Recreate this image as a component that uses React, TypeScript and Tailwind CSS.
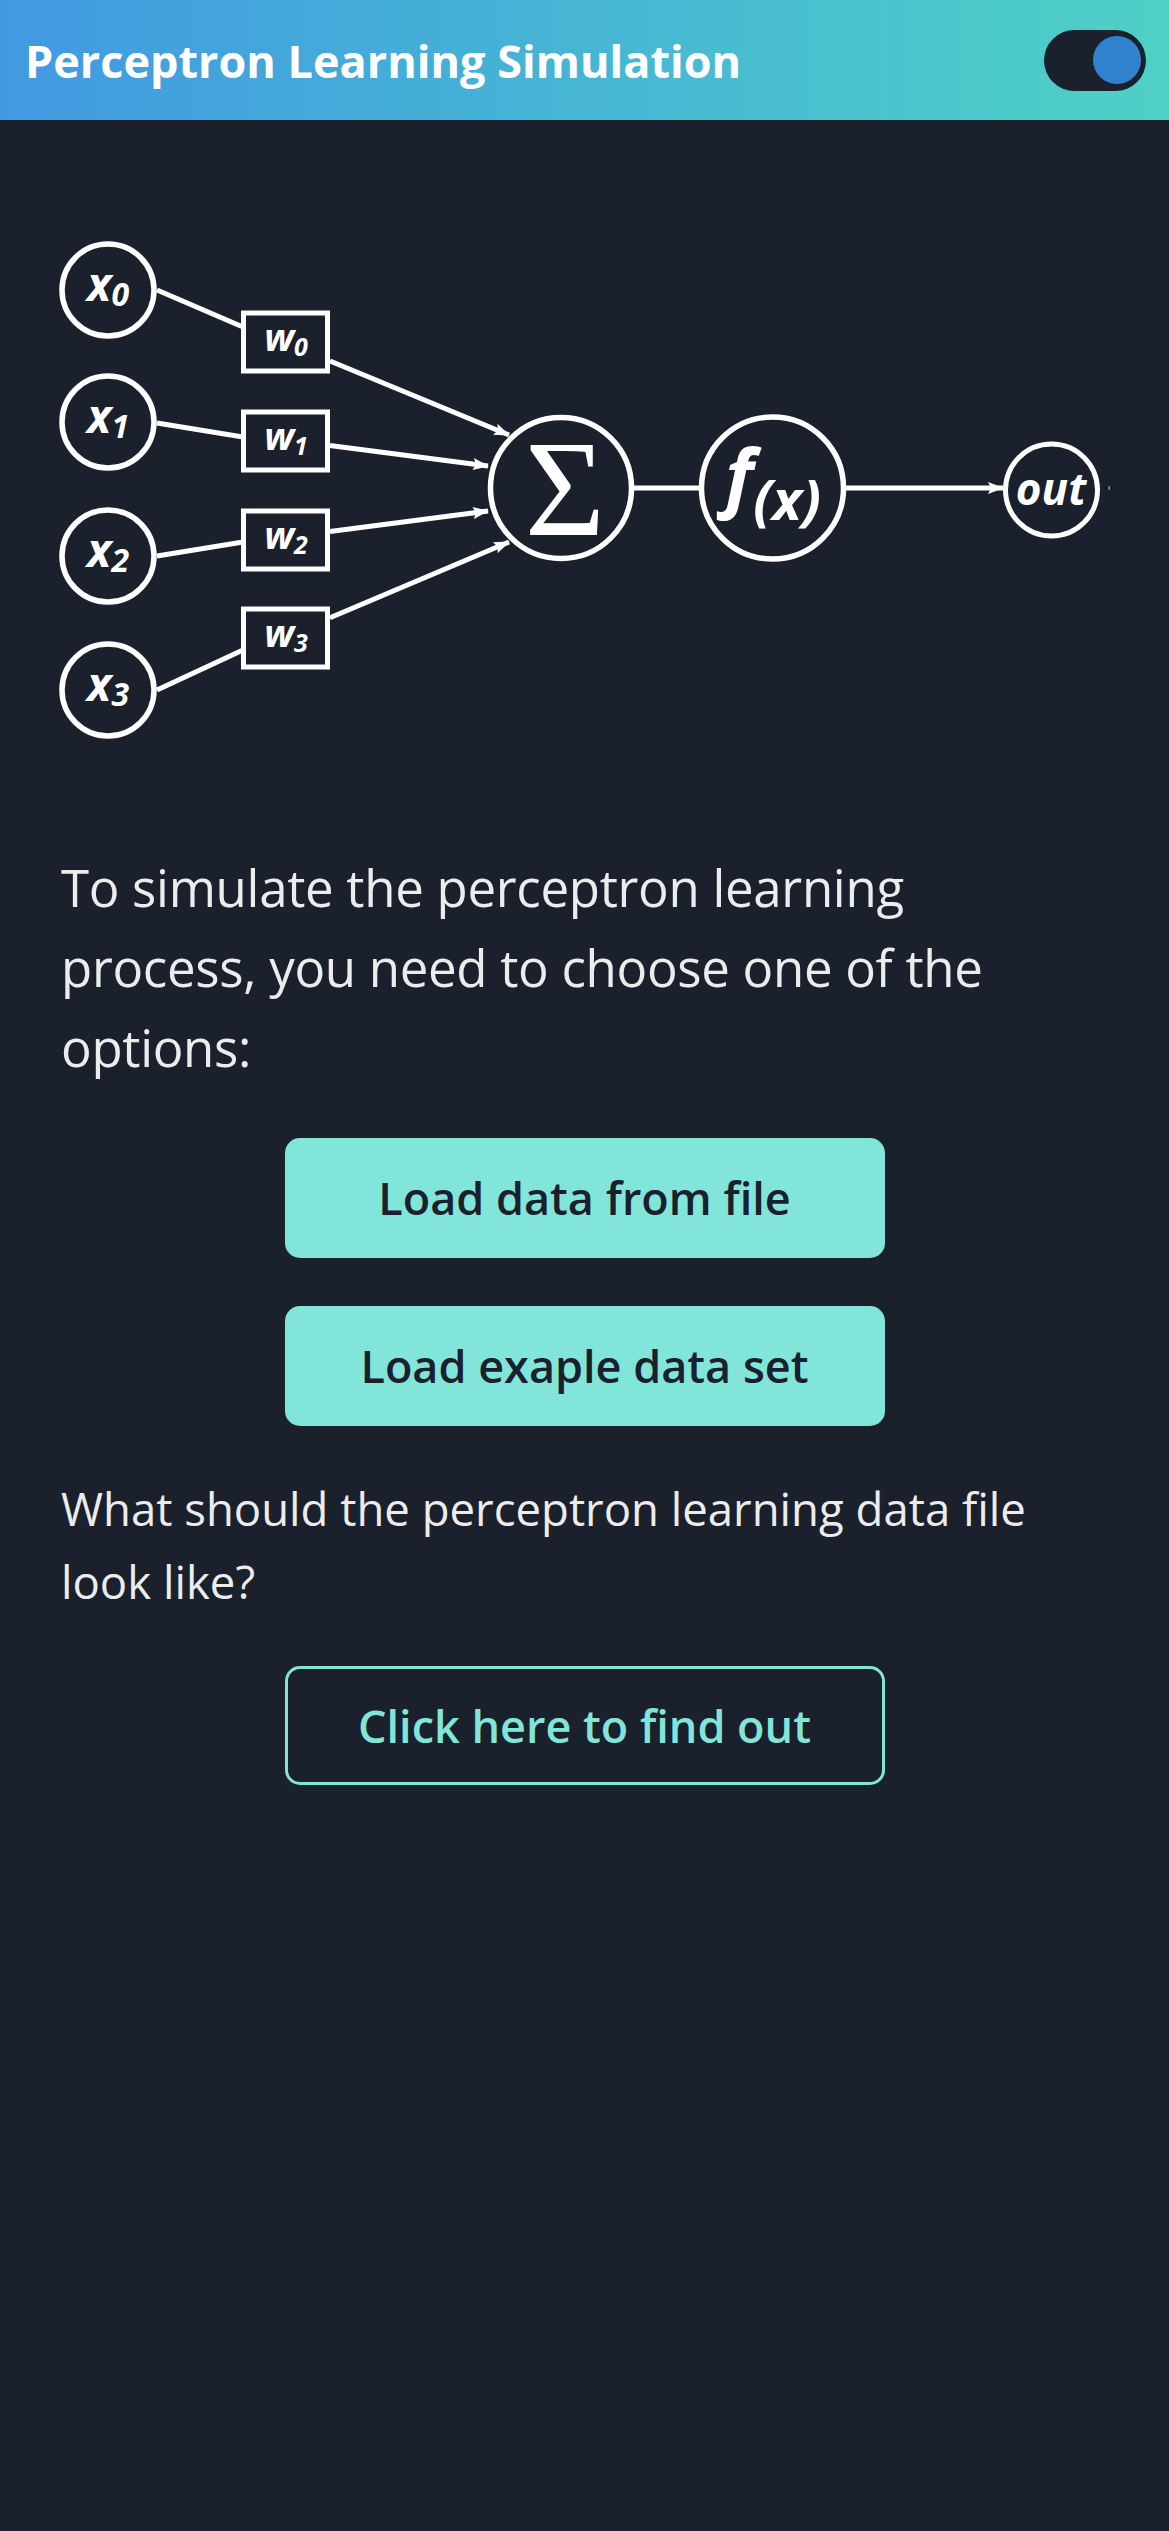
import React from "react";

const W = "#ffffff";

function Diagram() {
  const sw = 5;
  const xCircles = [290, 422, 556, 690];
  const wCenters = [342, 441, 540, 638];
  const xLines = [
    [157, 290, 243, 327],
    [157, 423, 243, 437],
    [157, 556, 243, 542],
    [157, 690, 243, 650],
  ];
  const wLines = [
    [330, 361, 509, 435],
    [330, 445.5, 488, 466],
    [330, 531.6, 488, 511],
    [330, 617.7, 509, 542],
  ];
  const font = "'Open Sans', 'Noto Sans', sans-serif";
  return (
    <svg
      width="1169"
      height="660"
      viewBox="0 120 1169 660"
      className="block"
      xmlns="http://www.w3.org/2000/svg"
    >
      <defs>
        <marker
          id="arr"
          markerUnits="userSpaceOnUse"
          markerWidth="16"
          markerHeight="14"
          refX="15"
          refY="7"
          orient="auto"
        >
          <path d="M0,1 L16,7 L0,13 L3,7 Z" fill={W} />
        </marker>
      </defs>
      {xCircles.map((cy, i) => (
        <g key={"x" + i}>
          <circle cx="108" cy={cy} r="46" fill="none" stroke={W} strokeWidth="5.5" />
          <text
            x="108"
            y={cy + 11}
            textAnchor="middle"
            fill={W}
            fontFamily={font}
            fontStyle="italic"
            fontWeight="700"
            fontSize="46"
          >
            x
            <tspan fontSize="32" dy="5">
              {i}
            </tspan>
          </text>
        </g>
      ))}
      {wCenters.map((cy, i) => (
        <g key={"w" + i}>
          <rect x="243.5" y={cy - 29} width="84" height="58" fill="none" stroke={W} strokeWidth={sw} />
          <text
            x="286"
            y={cy + 9}
            textAnchor="middle"
            fill={W}
            fontFamily={font}
            fontStyle="italic"
            fontWeight="700"
            fontSize="38"
          >
            w
            <tspan fontSize="25" dy="5">
              {i}
            </tspan>
          </text>
        </g>
      ))}
      {xLines.map((l, i) => (
        <line key={"xl" + i} x1={l[0]} y1={l[1]} x2={l[2]} y2={l[3]} stroke={W} strokeWidth={sw} />
      ))}
      {wLines.map((l, i) => (
        <line
          key={"wl" + i}
          x1={l[0]}
          y1={l[1]}
          x2={l[2]}
          y2={l[3]}
          stroke={W}
          strokeWidth={sw}
          markerEnd="url(#arr)"
        />
      ))}
      <circle cx="561" cy="488" r="70.5" fill="none" stroke={W} strokeWidth="5.5" />
      <text
        x="565"
        y="535"
        textAnchor="middle"
        fill={W}
        fontFamily="'Liberation Serif', serif"
        fontSize="138"
      >
        Σ
      </text>
      <line x1="634" y1="488" x2="699" y2="488" stroke={W} strokeWidth={sw} />
      <circle cx="772.5" cy="488" r="71" fill="none" stroke={W} strokeWidth="5.5" />
      <text
        x="773"
        y="503"
        textAnchor="middle"
        fill={W}
        fontFamily={font}
        fontStyle="italic"
        fontWeight="700"
        fontSize="76"
      >
        f
        <tspan fontSize="56" dy="17">
          (x)
        </tspan>
      </text>
      <line x1="846" y1="488" x2="1003" y2="488" stroke={W} strokeWidth={sw} markerEnd="url(#arr)" />
      <circle cx="1051.5" cy="490" r="46" fill="none" stroke={W} strokeWidth="5" />
      <text
        x="1051"
        y="505"
        textAnchor="middle"
        fill={W}
        fontFamily={font}
        fontStyle="italic"
        fontWeight="700"
        fontSize="44"
      >
        out
      </text>
      <rect x="1108.5" y="486" width="1.5" height="4" fill="#8a8f98" />
    </svg>
  );
}

export default function App() {
  return (
    <div
      className="min-h-[2531px] w-full bg-[#1a202c] text-[#ececed]"
      style={{ fontFamily: "'Open Sans', 'Noto Sans', sans-serif" }}
    >
      <header className="flex h-[120px] items-center justify-between bg-gradient-to-r from-[#4299e1] to-[#4fd1c5] pl-[25px] pr-[23px]">
        <h1 className="text-[45px] font-bold leading-none text-white">Perceptron Learning Simulation</h1>
        <div className="flex h-[61px] w-[102px] items-center justify-end rounded-full bg-[#1a202c] pr-[5px]">
          <div className="h-[48px] w-[48px] rounded-full bg-[#3182ce]" />
        </div>
      </header>

      <Diagram />

      <div className="px-[61px]">
        <p className="mt-[67px] text-[51px] leading-[80px] tracking-[-0.3px]">
          To simulate the perceptron learning
          <br />
          process, you need to choose one of the
          <br />
          options:
        </p>
      </div>

      <div className="mt-[51px] flex flex-col items-center gap-[48px]">
        <button className="flex h-[120px] w-[600px] items-center justify-center rounded-[15px] bg-[#81e6d9] text-[45px] font-semibold leading-[64px] text-[#1a202c]">
          Load data from file
        </button>
        <button className="flex h-[120px] w-[600px] items-center justify-center rounded-[15px] bg-[#81e6d9] text-[45px] font-semibold leading-[64px] text-[#1a202c]">
          Load exaple data set
        </button>
      </div>

      <div className="px-[61px]">
        <p className="mt-[46px] text-[45.5px] leading-[73px]">
          What should the perceptron learning data file
          <br />
          look like?
        </p>
      </div>

      <div className="mt-[48px] flex justify-center">
        <button className="flex h-[119px] w-[600px] items-center justify-center rounded-[15px] border-[3px] border-[#81e6d9] text-[45px] font-semibold leading-[64px] text-[#81e6d9]">
          Click here to find out
        </button>
      </div>
    </div>
  );
}
